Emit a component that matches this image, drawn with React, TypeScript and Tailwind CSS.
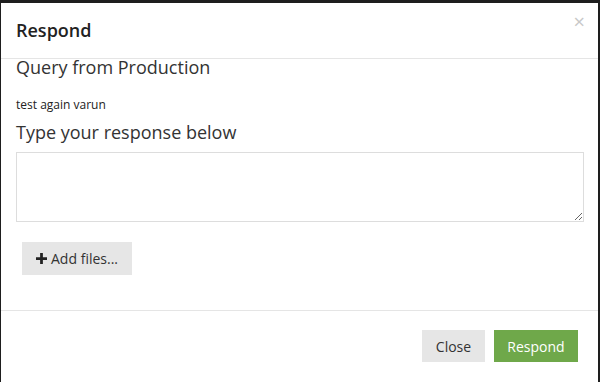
export default function App() {
  return (
    <div
      className="w-[600px] h-[382px] bg-[#1e1e1e] pt-[3px] pl-px pr-[2px] overflow-hidden"
      style={{ fontFamily: '"Open Sans", "Liberation Sans", sans-serif' }}
    >
      <div className="bg-white h-full flex flex-col text-[#333]">
        {/* Header */}
        <div className="h-[56px] border-b border-[#e5e5e5] flex items-center justify-between pl-[15px] pr-[15px]">
          <h3 className="text-[18px] font-semibold leading-[24px] text-[#222] pb-[1px]">Respond</h3>
          <span className="text-[20px] leading-none text-[#c8c8c8] -mt-[17px] mr-[-2px]">×</span>
        </div>

        {/* Body */}
        <div className="flex-1 pl-[15px] flex flex-col items-start">
          <h4 className="text-[18px] leading-[22px] mt-[-3px] text-[#333]">Query from Production</h4>
          <p className="text-[12px] leading-[18px] mt-[18px] text-[#222]">test again varun</p>
          <h4 className="text-[18px] leading-[24px] mt-[6px] text-[#333]">Type your response below</h4>
          <textarea className="w-[568px] h-[70px] mt-[8px] border border-[#ddd] resize-y outline-none" />
          <button className="mt-[20px] ml-[6px] w-[110px] h-[33px] bg-[#e6e6e6] flex items-center justify-center gap-[4px] text-[14px] text-[#333]">
            <svg width="11" height="11" viewBox="0 0 12 12">
              <path d="M4.5 0h3v4.5H12v3H7.5V12h-3V7.5H0v-3h4.5z" fill="#222" />
            </svg>
            Add files...
          </button>
        </div>

        {/* Footer */}
        <div className="h-[72px] border-t border-[#e5e5e5] flex items-start justify-end gap-[9px] pt-[19px] pr-[20px]">
          <button className="w-[63px] h-[32px] bg-[#e6e6e6] text-[14px] text-[#333]">Close</button>
          <button className="w-[84px] h-[32px] bg-[#6fa84a] text-[14px] text-white">Respond</button>
        </div>
      </div>
    </div>
  );
}
